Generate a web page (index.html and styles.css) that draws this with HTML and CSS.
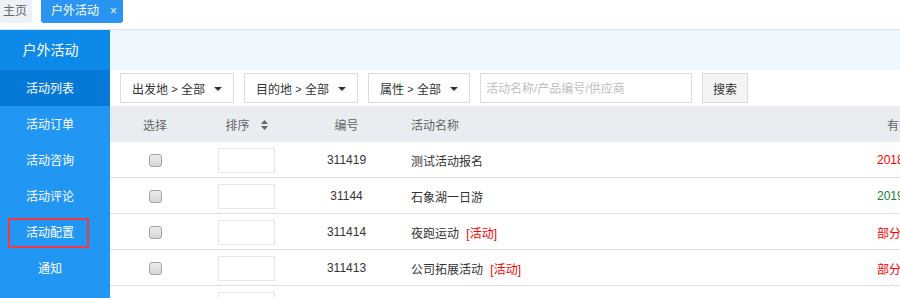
FILE: index.html
```html
<!DOCTYPE html>
<html lang="zh-CN">
<head>
    <meta charset="UTF-8" />
    <meta name="viewport" content="width=device-width, initial-scale=1.0" />
    <title>户外活动</title>
    <link rel="stylesheet" href="styles.css">
</head>
<body>
    <div class="tabbar">
        <span class="tab">主页</span>
        <span class="tab tab-active">户外活动<span class="tab-close">×</span></span>
    </div>

    <div class="layout">
        <aside class="sidebar">
            <div class="sidebar-title">户外活动</div>
            <a class="nav-item active">活动列表</a>
            <a class="nav-item">活动订单</a>
            <a class="nav-item">活动咨询</a>
            <a class="nav-item">活动评论</a>
            <a class="nav-item marked">活动配置</a>
            <a class="nav-item">通知</a>
        </aside>

        <main class="content">
            <div class="strip"></div>

            <div class="filters">
                <div class="select select-from">出发地 <span class="gt">&gt;</span> 全部<span class="caret"></span></div>
                <div class="select select-to">目的地 <span class="gt">&gt;</span> 全部<span class="caret"></span></div>
                <div class="select select-attr">属性 <span class="gt">&gt;</span> 全部<span class="caret"></span></div>
                <input class="search-input" type="text" placeholder="活动名称/产品编号/供应商" />
                <button class="btn">搜索</button>
            </div>

            <div class="table">
                <div class="row head">
                    <div class="cell center">选择</div>
                    <div class="cell center">排序
                        <svg class="sort-icon" width="7" height="10" viewBox="0 0 7 10"><path d="M0 4L3.5 0L7 4Z M0 6L3.5 10L7 6Z" fill="#666"/></svg>
                    </div>
                    <div class="cell center">编号</div>
                    <div class="cell name">活动名称</div>
                    <div class="cell date-head">有效期</div>
                </div>

                <div class="row">
                    <div class="cell center"><input class="check" type="checkbox" /></div>
                    <div class="cell center"><input class="sort-input" type="text" /></div>
                    <div class="cell center">311419</div>
                    <div class="cell name">测试活动报名</div>
                    <div class="cell date red">2018-10-10</div>
                </div>
                <div class="row">
                    <div class="cell center"><input class="check" type="checkbox" /></div>
                    <div class="cell center"><input class="sort-input" type="text" /></div>
                    <div class="cell center">31144</div>
                    <div class="cell name">石象湖一日游</div>
                    <div class="cell date green">2019-12-31</div>
                </div>
                <div class="row">
                    <div class="cell center"><input class="check" type="checkbox" /></div>
                    <div class="cell center"><input class="sort-input" type="text" /></div>
                    <div class="cell center">311414</div>
                    <div class="cell name">夜跑运动 <span class="tag">[活动]</span></div>
                    <div class="cell date red">部分有效</div>
                </div>
                <div class="row">
                    <div class="cell center"><input class="check" type="checkbox" /></div>
                    <div class="cell center"><input class="sort-input" type="text" /></div>
                    <div class="cell center">311413</div>
                    <div class="cell name">公司拓展活动 <span class="tag">[活动]</span></div>
                    <div class="cell date red">部分有效</div>
                </div>
                <div class="row">
                    <div class="cell center"><input class="check" type="checkbox" /></div>
                    <div class="cell center"><input class="sort-input" type="text" /></div>
                    <div class="cell center">311412</div>
                    <div class="cell name">户外徒步</div>
                    <div class="cell date green">2019-12-31</div>
                </div>
            </div>
        </main>
    </div>
</body>
</html>
```

FILE: styles.css
```css
body {
    margin: 0;
    height: 298px;
    overflow: hidden;
    font-family: "Liberation Sans", "Noto Sans CJK SC", sans-serif;
    font-size: 12px;
    color: #333;
    background-color: #fff;
}

/* tabs */
.tabbar {
    height: 29px;
    border-bottom: 1px solid #dfe4ea;
    display: flex;
    align-items: flex-start;
}

.tab {
    height: 23px;
    line-height: 23px;
    padding: 0 5px 0 3px;
    background-color: #eef1f8;
    color: #666;
    border-radius: 0 0 3px 3px;
    margin-right: 9px;
}

.tab-active {
    display: flex;
    width: 82px;
    box-sizing: border-box;
    padding: 0 0 0 10px;
    background-color: #2b94f0;
    color: #fff;
}

.tab-close {
    margin-left: 11px;
    font-size: 12px;
    color: #e6f2fd;
}

/* layout */
.layout {
    display: flex;
    height: 268px;
}

.sidebar {
    width: 110px;
    flex-shrink: 0;
    background-color: #2196f3;
    color: #fff;
}

.sidebar-title {
    height: 40px;
    box-sizing: border-box;
    padding: 1px 9px 0 0;
    line-height: 39px;
    text-align: center;
    font-size: 14px;
    background-color: #0c89e9;
}

.nav-item {
    display: block;
    position: relative;
    height: 36px;
    box-sizing: border-box;
    padding: 2px 10px 0 0;
    line-height: 34px;
    text-align: center;
    color: #fff;
}

.nav-item.active {
    background-color: #0679d7;
}

.nav-item.marked::after {
    content: "";
    position: absolute;
    left: 8px;
    top: 4px;
    width: 81px;
    height: 30px;
    box-sizing: border-box;
    border: 2px solid #f23a3f;
}

.content {
    flex: 1;
    min-width: 0;
    overflow: hidden;
}

.strip {
    height: 40px;
    background-color: #eef6fe;
}

/* filters */
.filters {
    height: 36px;
    box-sizing: border-box;
    padding: 3px 0 0 10px;
    display: flex;
    align-items: flex-start;
}

.select {
    height: 30px;
    box-sizing: border-box;
    border: 1px solid #dcdcdc;
    padding: 1px 0 0 11px;
    margin-right: 10px;
    display: flex;
    align-items: center;
    white-space: pre;
}

.select-from,
.select-to {
    width: 114px;
}

.select-attr {
    width: 102px;
}

.gt {
    font-size: 11px;
}

.caret {
    margin-left: 9px;
    width: 0;
    height: 0;
    border-left: 4px solid transparent;
    border-right: 4px solid transparent;
    border-top: 4px solid #333;
}

.search-input {
    width: 212px;
    height: 30px;
    box-sizing: border-box;
    border: 1px solid #dcdcdc;
    padding: 1px 5px 0;
    margin: 0 10px 0 0;
    font-family: inherit;
    font-size: 12px;
    outline: none;
}

.search-input::placeholder {
    color: #c0c0c0;
}

.btn {
    width: 46px;
    height: 30px;
    box-sizing: border-box;
    border: 1px solid #dcdcdc;
    background-color: #f4f4f4;
    color: #333;
    font-family: inherit;
    font-size: 12px;
    padding: 1px 0 0;
}

/* table */
.table {
    width: 915px;
}

.row {
    display: grid;
    grid-template-columns: 90px 93px 107px 475px 150px;
    height: 36px;
    box-sizing: border-box;
    padding-top: 1px;
    border-bottom: 1px solid #dce1e3;
    align-items: center;
}

.row.head {
    background-color: #e9edf1;
    color: #666;
    border-bottom: none;
}

.cell {
    white-space: nowrap;
}

.center {
    display: flex;
    justify-content: center;
    align-items: center;
}

.name {
    padding-left: 11px;
}

.date {
    padding-left: 2px;
}

.date-head {
    padding-left: 12px;
}

.sort-icon {
    margin-left: 11px;
}

.check {
    appearance: none;
    width: 13px;
    height: 13px;
    margin: 0;
    box-sizing: border-box;
    border: 1px solid #a5a5a5;
    border-radius: 3px;
    background: linear-gradient(#ececec, #d6d6d6);
}

.sort-input {
    width: 57px;
    height: 25px;
    box-sizing: border-box;
    border: 1px solid #e6e6e6;
    margin: 0;
    padding: 0;
    outline: none;
}

.tag {
    color: #f00;
    margin-left: 4px;
}

.red {
    color: #f00;
}

.green {
    color: #17803d;
}
```
